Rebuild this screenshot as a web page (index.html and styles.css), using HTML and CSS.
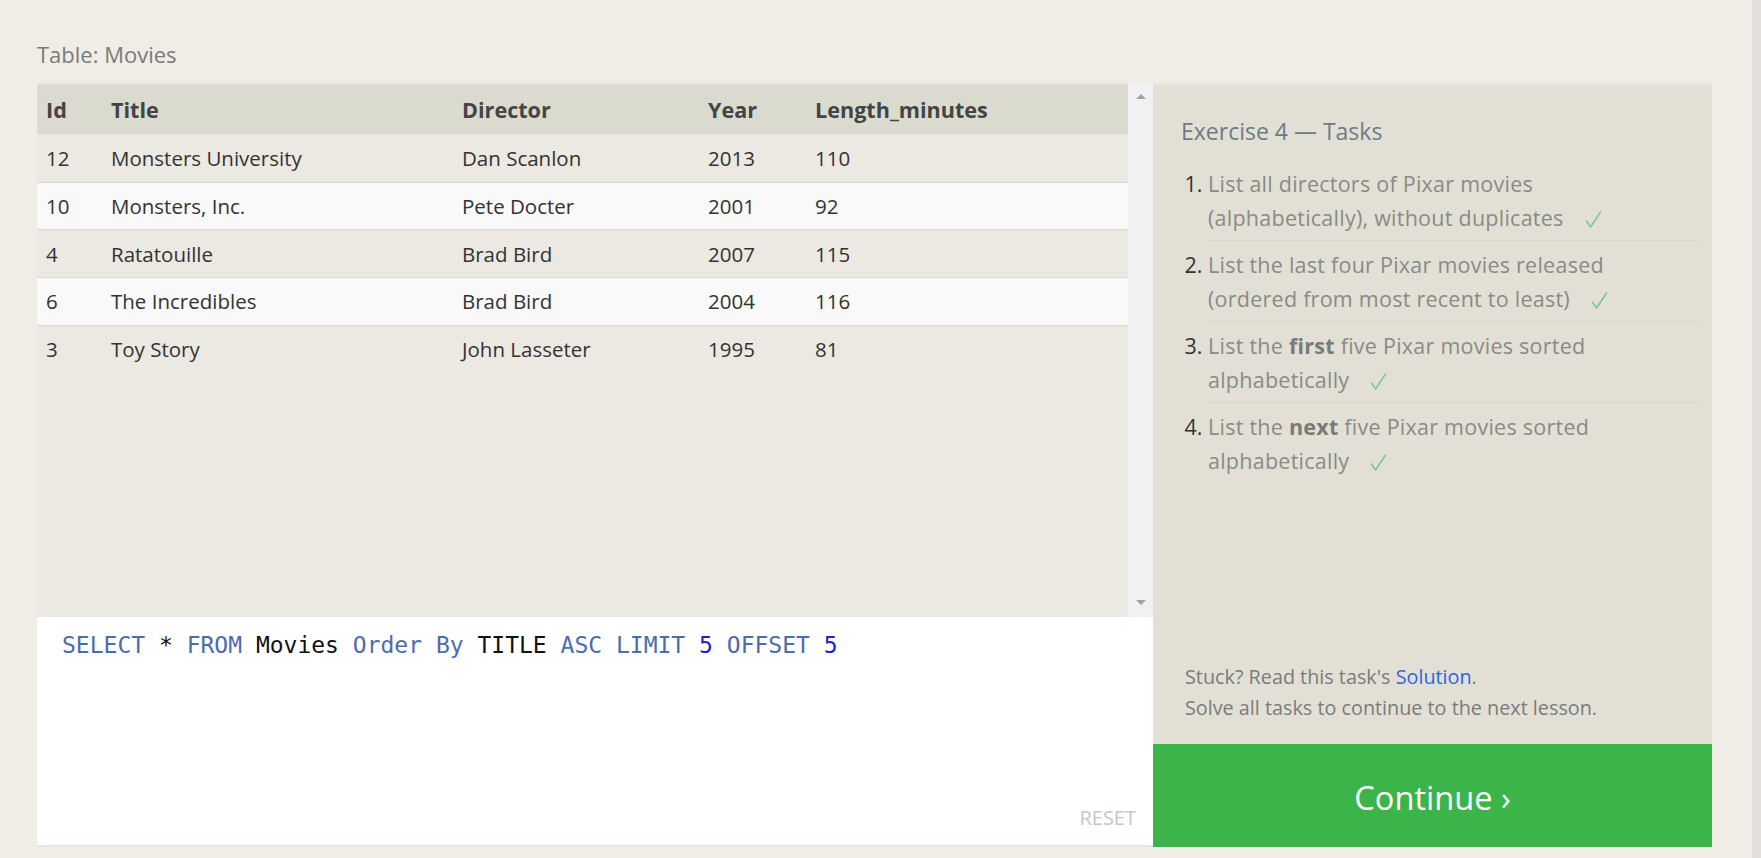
FILE: index.html
```html
<!DOCTYPE html>
<html lang="en">
<head>
<meta charset="utf-8">
<title>SQL Lesson 4</title>
<link rel="stylesheet" href="styles.css">
</head>
<body>
<div class="page">
  <main class="main">
    <div class="caption">Table: Movies</div>
    <div class="workspace">
      <div class="left">
        <div class="table-wrap">
          <div class="table">
            <div class="row head"><span>Id</span><span>Title</span><span>Director</span><span>Year</span><span>Length_minutes</span></div>
            <div class="row body"><span>12</span><span>Monsters University</span><span>Dan Scanlon</span><span>2013</span><span>110</span></div>
            <div class="row body even"><span>10</span><span>Monsters, Inc.</span><span>Pete Docter</span><span>2001</span><span>92</span></div>
            <div class="row body"><span>4</span><span>Ratatouille</span><span>Brad Bird</span><span>2007</span><span>115</span></div>
            <div class="row body even"><span>6</span><span>The Incredibles</span><span>Brad Bird</span><span>2004</span><span>116</span></div>
            <div class="row body"><span>3</span><span>Toy Story</span><span>John Lasseter</span><span>1995</span><span>81</span></div>
          </div>
          <div class="scrollbar"><span class="arrow up"></span><span class="arrow down"></span></div>
        </div>
        <div class="editor">
          <div class="code"><span class="kw">SELECT</span> * <span class="kw">FROM</span> Movies <span class="kw">Order</span> <span class="kw">By</span> TITLE <span class="kw">ASC</span> <span class="kw">LIMIT</span> <span class="num">5</span> <span class="kw">OFFSET</span> <span class="num">5</span></div>
          <div class="reset">RESET</div>
        </div>
      </div>
      <div class="right">
        <div class="tasks">
          <h2 class="tasks-title">Exercise 4 — Tasks</h2>
          <ol class="task-list">
            <li><span class="t">List all directors of Pixar movies<br>(alphabetically), without duplicates</span><svg class="check" width="17" height="17" viewBox="0 0 17 17"><path d="M1.5 10 L5.6 16 L15.5 1" /></svg></li>
            <li><span class="t">List the last four Pixar movies released<br>(ordered from most recent to least)</span><svg class="check" width="17" height="17" viewBox="0 0 17 17"><path d="M1.5 10 L5.6 16 L15.5 1" /></svg></li>
            <li><span class="t">List the <b>first</b> five Pixar movies sorted<br>alphabetically</span><svg class="check" width="17" height="17" viewBox="0 0 17 17"><path d="M1.5 10 L5.6 16 L15.5 1" /></svg></li>
            <li><span class="t">List the <b>next</b> five Pixar movies sorted<br>alphabetically</span><svg class="check" width="17" height="17" viewBox="0 0 17 17"><path d="M1.5 10 L5.6 16 L15.5 1" /></svg></li>
          </ol>
          <div class="note">Stuck? Read this task's <a href="#">Solution</a>.<br>Solve all tasks to continue to the next lesson.</div>
        </div>
        <button class="continue">Continue ›</button>
      </div>
    </div>
  </main>
  <div class="edge"></div>
</div>
</body>
</html>
```

FILE: styles.css
```css
html, body {
  margin: 0;
  padding: 0;
}
body {
  background: #f0ede6;
  font-family: "Open Sans", "Noto Sans", sans-serif;
  overflow: hidden;
}
.page {
  display: flex;
  height: 858px;
}
.main {
  flex: 1;
  padding: 39.3px 40px 0 37px;
}
.caption {
  font-size: 22px;
  line-height: 30px;
  color: #7a7a7a;
  margin-bottom: 13.7px;
}
.workspace {
  display: flex;
  align-items: flex-start;
}
.left {
  width: 1116px;
}
.table-wrap {
  display: flex;
  height: 534px;
}
.table {
  flex: 1;
  background: #ebe9e1;
  border-top: 2px solid #e2e1d8;
}
.row {
  display: grid;
  grid-template-columns: 65px 351px 246px 107px 1fr;
  align-items: center;
  height: 47.7px;
  box-sizing: border-box;
  font-size: 20.5px;
  color: #333;
}
.row > span {
  padding-left: 9px;
  white-space: nowrap;
}
.row.head {
  height: 49px;
  background: #dbdacf;
  font-weight: 700;
  font-size: 21.6px;
  color: #444;
}
.row.body + .row.body {
  border-top: 1px solid #dcdad3;
}
.row.even {
  background: #f9f9f9;
}
.scrollbar {
  width: 25px;
  background: #f1f1f1;
  display: flex;
  flex-direction: column;
  justify-content: space-between;
  align-items: center;
  padding: 11.5px 0;
  box-sizing: border-box;
}
.arrow {
  width: 0;
  height: 0;
  border-left: 5px solid transparent;
  border-right: 5px solid transparent;
}
.arrow.up {
  border-bottom: 5px solid #a3a3a3;
}
.arrow.down {
  border-top: 5px solid #a3a3a3;
}
.editor {
  height: 230px;
  box-sizing: border-box;
  background: #fff;
  border-bottom: 2px solid #e7e5dd;
  display: flex;
  flex-direction: column;
  padding: 13.5px 17px 15px 25px;
}
.code {
  font-family: "DejaVu Sans Mono", "Liberation Mono", monospace;
  font-size: 23px;
  line-height: 30px;
  white-space: pre;
  color: #111;
}
.code .kw {
  color: #4d6cab;
}
.code .num {
  color: #1c1cd0;
}
.reset {
  margin-top: auto;
  align-self: flex-end;
  font-size: 20px;
  line-height: 24px;
  color: #c6c6c6;
}
.right {
  width: 559px;
}
.tasks {
  height: 661px;
  box-sizing: border-box;
  background: #e2e0d5;
  border-top: 3px solid #e7e6dd;
  padding: 27.6px 14px 21px 28px;
  display: flex;
  flex-direction: column;
}
.tasks-title {
  margin: 0;
  font-size: 23px;
  font-weight: 400;
  line-height: 34px;
  color: #6e7a87;
}
.task-list {
  margin: 12.9px 0 0;
  padding-left: 27px;
  font-size: 21.5px;
  letter-spacing: 0.25px;
  line-height: 33.7px;
  color: #333;
}
.task-list li {
  padding: 7px 0 5.5px;
  border-bottom: 1px solid #d7d5cb;
}
.task-list li::marker {
  letter-spacing: 0;
}
.task-list li:last-child {
  border-bottom: none;
}
.task-list .t {
  color: #8a8a87;
}
.task-list b {
  color: #7a7a77;
  font-weight: 700;
}
.check {
  margin-left: 21px;
  vertical-align: -2px;
}
.check path {
  fill: none;
  stroke: #78c98a;
  stroke-width: 1.5;
  stroke-linecap: round;
  stroke-linejoin: round;
}
.note {
  margin-top: auto;
  margin-left: 4px;
  font-size: 19.8px;
  line-height: 30.3px;
  color: #7b7b7b;
}
.note a {
  color: #2a66e0;
  text-decoration: none;
}
.continue {
  display: block;
  width: 100%;
  height: 103px;
  margin: 0;
  border: 0;
  padding: 4px 0 0;
  background: #3bb54a;
  color: #fff;
  font-family: "Open Sans", "Noto Sans", sans-serif;
  font-size: 32.6px;
  font-weight: 400;
  cursor: pointer;
}
.edge {
  width: 9px;
  background: #e3dfdc;
}
```
